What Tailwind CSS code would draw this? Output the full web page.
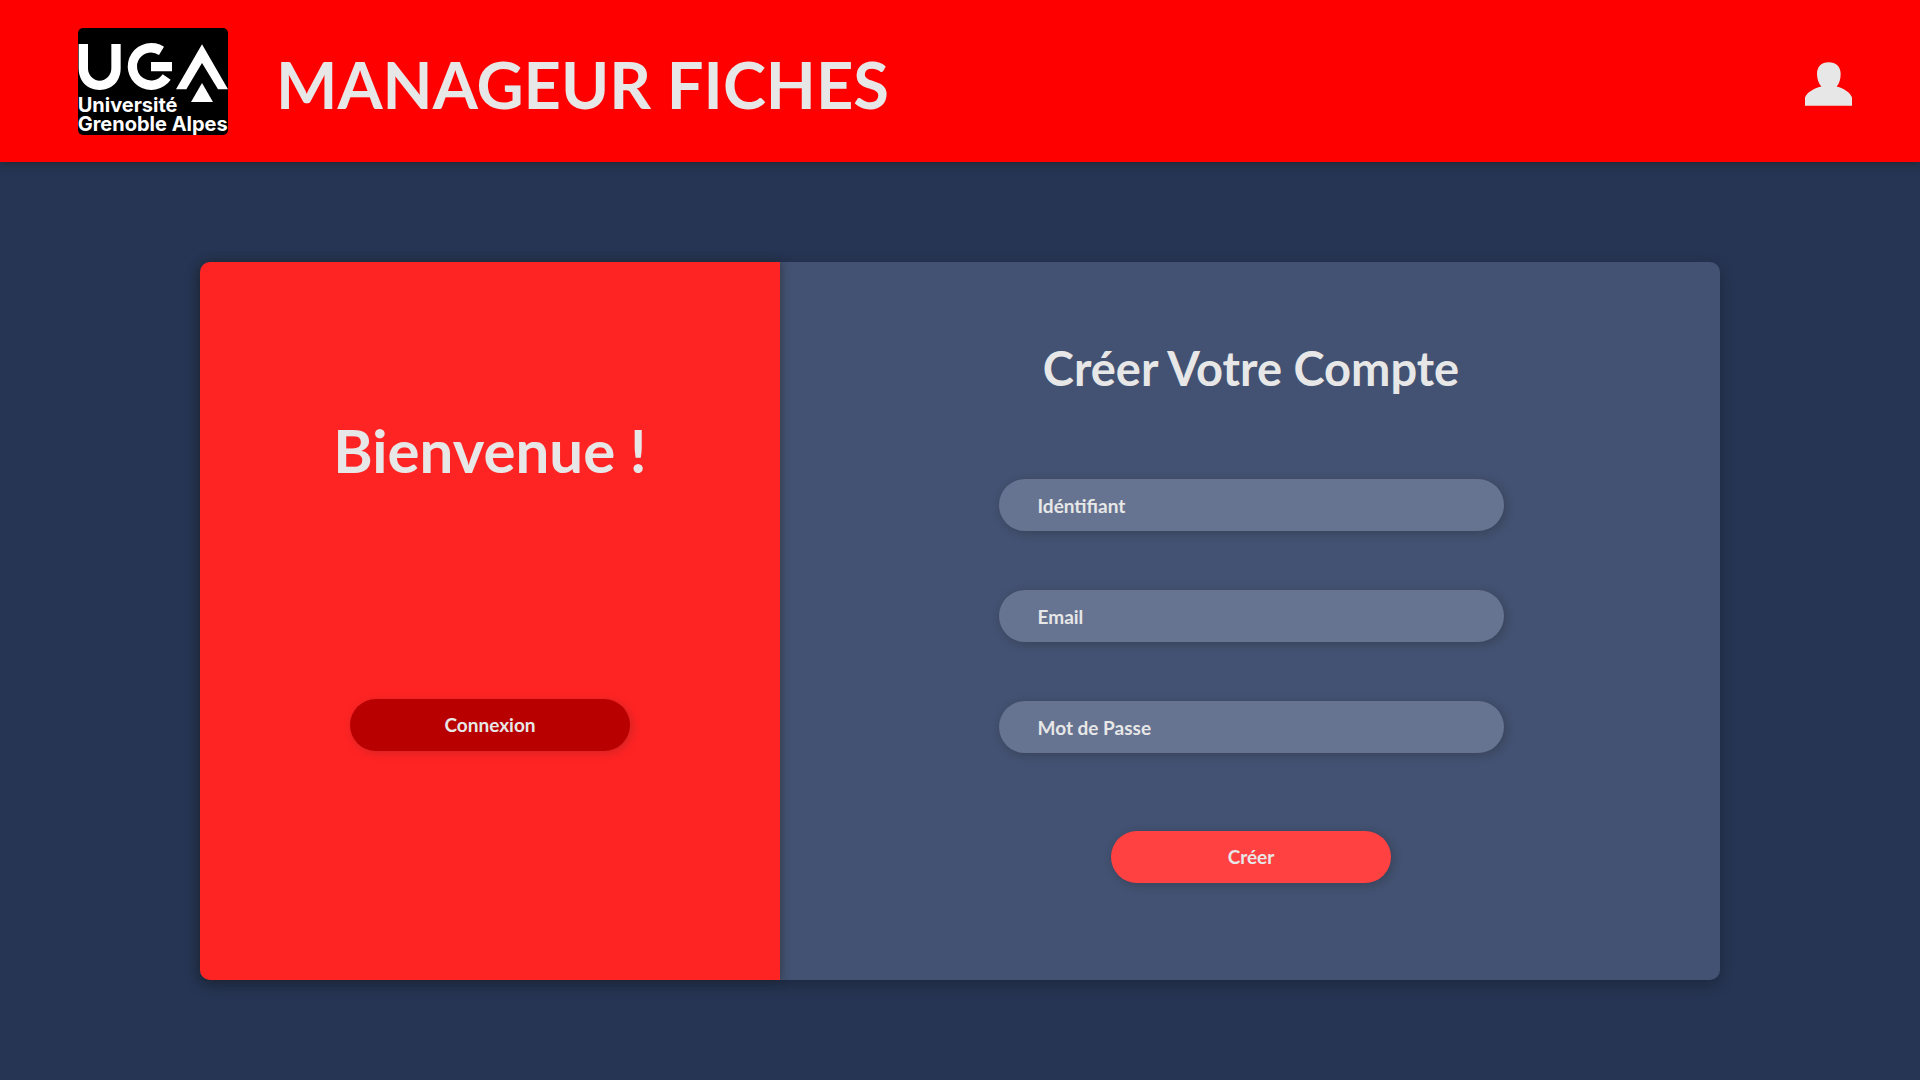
<!DOCTYPE html>
<html lang="fr">
<head>
  <meta charset="utf-8">
  <meta name="viewport" content="width=device-width, initial-scale=1">
  <title>Manageur Fiches</title>
  <script src="https://cdn.jsdelivr.net/npm/@tailwindcss/browser@4"></script>
</head>
<body class="flex min-h-screen flex-col bg-[#263553] font-[Lato,sans-serif] font-bold text-[#e7e7e7]">
  <header class="flex items-center justify-between bg-[#ff0000] pt-7 pr-17 pb-[27px] pl-[78px] shadow-[0_2px_8px_rgba(34,34,34,0.6)]">
    <div class="flex items-center gap-12">
      <a href="#" aria-label="Université Grenoble Alpes" class="block overflow-hidden rounded-[5px] bg-black">
        <svg class="block h-[107px] w-[150px]" viewBox="0 0 450 321" fill="#fff">
          <path d="M2 48H30V121A35 37 0 0 0 100 121V48H128V121C128 160 102 186 65 186S2 160 2 121Z"/>
          <path d="M258 56A70.500 70.500 0 1 0 278 155L254 139A42 42 0 1 1 243 81Z"/>
          <path d="M219 102H282V130H219Z"/>
          <path d="M372 49L450 184H420L372 105L325 184H294Z"/>
          <path d="M372 165L405 222H339Z"/>
          <text x="-1" y="251" font-family="Inter, sans-serif" font-weight="700" font-size="60">Université</text>
          <text x="-1" y="309" font-family="Inter, sans-serif" font-weight="700" font-size="60">Grenoble Alpes</text>
        </svg>
      </a>
      <h1 class="pt-1 text-[65px] leading-20">MANAGEUR FICHES</h1>
    </div>
    <button type="button" aria-label="Mon compte" class="cursor-pointer pt-1">
      <svg class="block h-11 w-[47px]" viewBox="0 0 141 131" fill="#e7e7e7">
        <path d="M71 0C93 0 107 13 107 35C107 51 103 64 95 73C117 79 136 91 141 106V131H0V106C5 91 26 79 49 73C41 64 36 51 36 35C36 13 49 0 71 0Z"/>
      </svg>
    </button>
  </header>

  <main class="px-[200px] py-[100px]">
    <div class="grid grid-cols-[29fr_47fr] rounded-[10px] bg-[#435272] shadow-[0_5px_15px_rgba(0,0,0,0.25)]">
      <section class="flex flex-col items-center rounded-l-[10px] bg-[#ff2424] pt-[148px] shadow-[0_0_10px_rgba(34,34,34,0.6)]">
        <h2 class="text-[60px] leading-20">Bienvenue !</h2>
        <button type="button" class="mt-[209px] h-13 w-[280px] cursor-pointer rounded-full bg-[#b90000] text-[19px] shadow-[2px_2px_10px_rgba(34,34,34,0.2)]">Connexion</button>
      </section>

      <form class="flex flex-col items-center pt-[76px] pb-[97px] pl-[2px]">
        <h2 class="text-[47px] leading-15">Créer Votre Compte</h2>
        <div class="mt-[81px] flex w-[505px] flex-col gap-[59px]">
          <input type="text" aria-label="Idéntifiant" placeholder="Idéntifiant" class="h-13 w-full rounded-full bg-[#667391] px-[39px] text-[19px] shadow-[2px_2px_10px_rgba(34,34,34,0.3)] placeholder:text-[#e7e7e7]">
          <input type="email" aria-label="Email" placeholder="Email" class="h-13 w-full rounded-full bg-[#667391] px-[39px] text-[19px] shadow-[2px_2px_10px_rgba(34,34,34,0.3)] placeholder:text-[#e7e7e7]">
          <input type="password" aria-label="Mot de Passe" placeholder="Mot de Passe" class="h-13 w-full rounded-full bg-[#667391] px-[39px] text-[19px] shadow-[2px_2px_10px_rgba(34,34,34,0.3)] placeholder:text-[#e7e7e7]">
        </div>
        <button type="submit" class="mt-[78px] h-13 w-[280px] cursor-pointer rounded-full bg-[#ff4141] text-[19px] shadow-[2px_2px_10px_rgba(34,34,34,0.3)]">Créer</button>
      </form>
    </div>
  </main>
</body>
</html>
